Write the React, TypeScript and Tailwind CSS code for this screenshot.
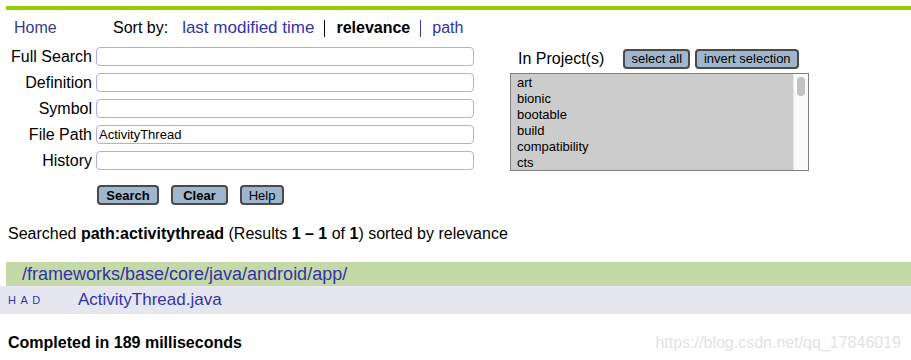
import React from 'react'

const fields = ['Full Search', 'Definition', 'Symbol', 'File Path', 'History']
const projects = ['art', 'bionic', 'bootable', 'build', 'compatibility', 'cts']

function Btn({ children, bold, className = '' }: { children: React.ReactNode; bold?: boolean; className?: string }) {
  return (
    <button
      className={`h-[20px] px-[6px] rounded-[4px] border-2 border-[#4a4a4a] bg-[#9fb7cd] text-[13px] leading-none text-black ${bold ? 'font-bold' : ''} ${className}`}
    >
      {children}
    </button>
  )
}

export default function App() {
  return (
    <div className="w-[911px] h-[360px] bg-white overflow-hidden text-black" style={{ fontFamily: '"Liberation Sans", Arial, sans-serif' }}>
      <div className="ml-[6px] mt-[6px] h-[4px] bg-[#99cc00]" />

      <div className="flex items-center h-[30px] mt-[3px] pl-[14px] text-[16px]">
        <a className="text-[#3a3a8c] w-[99px]">Home</a>
        <span>Sort by:</span>
        <a className="ml-[14px] text-[17px] text-[#3333aa]">last modified time</a>
        <span className="ml-[10px] mr-[11px] w-px h-[17px] bg-black" />
        <b>relevance</b>
        <span className="ml-[10px] mr-[11px] w-px h-[17px] bg-[#3333aa]" />
        <a className="text-[#3333aa]">path</a>
      </div>

      <div className="flex mt-[4px]">
        <div className="w-[510px]">
          <div className="flex flex-col gap-[7px]">
            {fields.map(f => (
              <div key={f} className="flex items-center h-[19px]">
                <label className="w-[92px] text-right text-[16px]">{f}</label>
                <input
                  defaultValue={f === 'File Path' ? 'ActivityThread' : ''}
                  className="ml-[4px] w-[378px] h-[19px] border border-[#b4aaf5] rounded-[4px] px-[2px] text-[13px] outline-none"
                />
              </div>
            ))}
          </div>
          <div className="flex gap-[12px] pl-[97px] mt-[15px]">
            <Btn bold className="w-[62px]">Search</Btn>
            <Btn bold className="w-[57px]">Clear</Btn>
            <Btn className="w-[44px]">Help</Btn>
          </div>
        </div>

        <div className="w-[299px]">
          <div className="flex items-center h-[21px] mt-[1px]">
            <span className="ml-[8px] text-[16px]">In Project(s)</span>
            <Btn className="ml-[19px] w-[67px]">select all</Btn>
            <Btn className="ml-[5px] w-[104px]">invert selection</Btn>
          </div>
          <div className="mt-[4px] h-[98px] border border-[#808080] bg-[#cccccc] flex overflow-hidden">
            <ul className="flex-1 pl-[6px] pt-px text-[13px] leading-[16px]">
              {projects.map(p => (
                <li key={p}>{p}</li>
              ))}
            </ul>
            <div className="w-[15px] bg-[#fafafa] border-l border-[#e8e8e8] pt-[3px] flex justify-center">
              <div className="w-[8px] h-[19px] rounded-full bg-[#c2c2c2]" />
            </div>
          </div>
        </div>
      </div>

      <p className="mt-[19px] pl-[8px] text-[16px] leading-[20px]">
        Searched <b>path:activitythread</b> (Results <b>1 – 1</b> of <b>1</b>) sorted by relevance
      </p>

      <div className="ml-[6px] mt-[18px]">
        <div className="h-[24px] bg-[#c3d9a7] pl-[16px] flex items-center text-[18px] text-[#3333aa]">
          /frameworks/base/core/java/android/app/
        </div>
        <div className="h-[28px] bg-[#e6e6f0] flex items-center -ml-[6px] pl-[8px]">
          <span className="w-[70px] text-[11px] tracking-[1px] text-[#3333aa]">H A D</span>
          <span className="text-[17px] text-[#3333aa]">ActivityThread.java</span>
        </div>
      </div>

      <div className="flex items-center mt-[19px] pl-[8px] leading-[20px]">
        <b className="text-[16px]">Completed in 189 milliseconds</b>
        <span className="ml-auto mr-[10px] text-[16px] text-[#e3e3e3]">https://blog.csdn.net/qq_17846019</span>
      </div>
    </div>
  )
}
